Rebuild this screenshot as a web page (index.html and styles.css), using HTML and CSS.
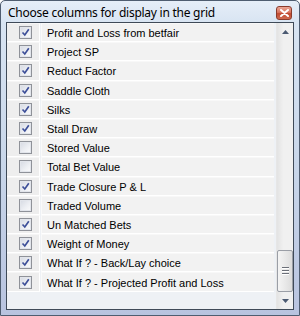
FILE: index.html
```html
<!DOCTYPE html>
<html>
<head>
<meta charset="utf-8">
<link rel="stylesheet" href="styles.css">
</head>
<body>
<div class="window">
  <div class="titlebar">
    <span class="title">Choose columns for display in the grid</span>
    <div class="close"><svg width="9" height="8" viewBox="0 0 9 8"><path d="M1 1 L8 7 M8 1 L1 7" stroke="#fff" stroke-width="2" stroke-linecap="round"/></svg></div>
  </div>
  <div class="client">
    <div class="grid">
      <div class="rows">
        <div class="row"><div class="cbcell"><span class="cb"><svg class="tick" viewBox="0 0 9 9"><path d="M1.5 4.5 L3.8 7 L7.8 1.3" fill="none" stroke="#3d4f99" stroke-width="1.7"/></svg></span></div><div class="name">Profit and Loss from betfair</div></div>
        <div class="row"><div class="cbcell"><span class="cb"><svg class="tick" viewBox="0 0 9 9"><path d="M1.5 4.5 L3.8 7 L7.8 1.3" fill="none" stroke="#3d4f99" stroke-width="1.7"/></svg></span></div><div class="name">Project SP</div></div>
        <div class="row"><div class="cbcell"><span class="cb"><svg class="tick" viewBox="0 0 9 9"><path d="M1.5 4.5 L3.8 7 L7.8 1.3" fill="none" stroke="#3d4f99" stroke-width="1.7"/></svg></span></div><div class="name">Reduct Factor</div></div>
        <div class="row"><div class="cbcell"><span class="cb"><svg class="tick" viewBox="0 0 9 9"><path d="M1.5 4.5 L3.8 7 L7.8 1.3" fill="none" stroke="#3d4f99" stroke-width="1.7"/></svg></span></div><div class="name">Saddle Cloth</div></div>
        <div class="row"><div class="cbcell"><span class="cb"><svg class="tick" viewBox="0 0 9 9"><path d="M1.5 4.5 L3.8 7 L7.8 1.3" fill="none" stroke="#3d4f99" stroke-width="1.7"/></svg></span></div><div class="name">Silks</div></div>
        <div class="row"><div class="cbcell"><span class="cb"><svg class="tick" viewBox="0 0 9 9"><path d="M1.5 4.5 L3.8 7 L7.8 1.3" fill="none" stroke="#3d4f99" stroke-width="1.7"/></svg></span></div><div class="name">Stall Draw</div></div>
        <div class="row"><div class="cbcell"><span class="cb"></span></div><div class="name">Stored Value</div></div>
        <div class="row"><div class="cbcell"><span class="cb"></span></div><div class="name">Total Bet Value</div></div>
        <div class="row"><div class="cbcell"><span class="cb"><svg class="tick" viewBox="0 0 9 9"><path d="M1.5 4.5 L3.8 7 L7.8 1.3" fill="none" stroke="#3d4f99" stroke-width="1.7"/></svg></span></div><div class="name">Trade Closure P &amp; L</div></div>
        <div class="row"><div class="cbcell"><span class="cb"></span></div><div class="name">Traded Volume</div></div>
        <div class="row"><div class="cbcell"><span class="cb"><svg class="tick" viewBox="0 0 9 9"><path d="M1.5 4.5 L3.8 7 L7.8 1.3" fill="none" stroke="#3d4f99" stroke-width="1.7"/></svg></span></div><div class="name">Un Matched Bets</div></div>
        <div class="row"><div class="cbcell"><span class="cb"><svg class="tick" viewBox="0 0 9 9"><path d="M1.5 4.5 L3.8 7 L7.8 1.3" fill="none" stroke="#3d4f99" stroke-width="1.7"/></svg></span></div><div class="name">Weight of Money</div></div>
        <div class="row"><div class="cbcell"><span class="cb"><svg class="tick" viewBox="0 0 9 9"><path d="M1.5 4.5 L3.8 7 L7.8 1.3" fill="none" stroke="#3d4f99" stroke-width="1.7"/></svg></span></div><div class="name">What If ? - Back/Lay choice</div></div>
        <div class="row"><div class="cbcell"><span class="cb"><svg class="tick" viewBox="0 0 9 9"><path d="M1.5 4.5 L3.8 7 L7.8 1.3" fill="none" stroke="#3d4f99" stroke-width="1.7"/></svg></span></div><div class="name">What If ? - Projected Profit and Loss</div></div>
      </div>
      <div class="vscroll">
        <div class="sbtn"><svg width="7" height="4" viewBox="0 0 7 4"><path d="M0 4 L3.5 0 L7 4 Z" fill="#4b5a72"/></svg></div>
        <div class="track"><div class="thumb"><span class="grip"></span><span class="grip"></span><span class="grip"></span></div></div>
        <div class="sbtn"><svg width="7" height="4" viewBox="0 0 7 4"><path d="M0 0 L7 0 L3.5 4 Z" fill="#4b5a72"/></svg></div>
      </div>
    </div>
  </div>
</div>
</body>
</html>
```
FILE: styles.css
```css
html, body { margin: 0; padding: 0; }
body { width: 300px; height: 316px; overflow: hidden; background: #fff; }

.window {
  box-sizing: border-box;
  width: 300px;
  height: 316px;
  border: 1px solid #4f5d70;
  border-radius: 5px 5px 0 0;
  background: linear-gradient(to bottom, #e6eef8 0px, #d8e4f2 22px, #c9d7ea 160px, #b8c3df 316px);
  display: flex;
  flex-direction: column;
  font-family: "Liberation Sans", Arial, sans-serif;
}

.titlebar {
  height: 21px;
  display: flex;
  align-items: center;
  padding: 0 7px 0 7px;
}
.title {
  font-family: "Noto Sans", "Open Sans", sans-serif;
  font-size: 12px;
  letter-spacing: -0.25px;
  color: #000;
  margin-top: 1px;
  flex: 1;
}
.close {
  width: 16px;
  height: 14px;
  box-sizing: border-box;
  margin-top: 2px;
  border: 1px solid #8a3b2c;
  border-radius: 3px;
  background: linear-gradient(to bottom, #eba796 0%, #d8735e 45%, #c04a30 55%, #cf6a50 100%);
  display: flex;
  align-items: center;
  justify-content: center;
}
.close svg { display: block; }

.client {
  flex: 1;
  display: flex;
  padding: 0 5px 5px 5px;
}

.grid {
  flex: 1;
  display: flex;
  border: 1px solid #3f4a58;
  background: #eef1f5;
}

.rows {
  flex: 1;
  display: flex;
  flex-direction: column;
}

.row {
  height: 19.2px;
  display: flex;
  flex: none;
}
.cbcell {
  width: 33px;
  box-sizing: border-box;
  background: #eeeeee;
  border-right: 1px solid #ffffff;
  border-bottom: 1px solid #ffffff;
  border-top: 1px solid #f6f6f6;
  display: flex;
  align-items: center;
  padding-left: 12px;
}
.name {
  flex: 1;
  margin-left: 1px;
  margin-right: 2px;
  box-sizing: border-box;
  background: #f2f2f2;
  border-bottom: 1px solid #ffffff;
  border-top: 1px solid #f8f8f8;
  border-left: 1px solid #fafafa;
  font-size: 11px;
  color: #000;
  padding-left: 5px;
  display: flex;
  align-items: center;
  padding-top: 1px;
  white-space: nowrap;
}

.cb {
  width: 13px;
  height: 13px;
  box-sizing: border-box;
  border: 1px solid #8f9299;
  background: linear-gradient(135deg, #d5d9e2 0%, #eef0f4 60%, #fbfbfc 100%);
  box-shadow: inset 0 0 0 1px #e2e5eb;
  display: flex;
  align-items: center;
  justify-content: center;
}
.tick { width: 9px; height: 9px; display: block; }

.vscroll {
  width: 17px;
  display: flex;
  flex-direction: column;
  background: linear-gradient(to right, #e3e3e3, #f0f0f0 40%, #f0f0f0);
  border-left: 1px solid #e6e6e6;
  box-sizing: border-box;
}
.sbtn {
  height: 17px;
  display: flex;
  align-items: center;
  justify-content: center;
  flex: none;
}
.track {
  flex: 1;
  display: flex;
  flex-direction: column;
  justify-content: flex-end;
}
.thumb {
  height: 42px;
  box-sizing: border-box;
  border: 1px solid #9a9ea6;
  border-radius: 2px;
  background: linear-gradient(to right, #f4f4f4, #e9e9e9 50%, #dcdcdc);
  display: flex;
  flex-direction: column;
  align-items: center;
  justify-content: center;
  gap: 1px;
}
.grip {
  width: 7px;
  height: 1px;
  background: #6b6f78;
  box-shadow: 0 1px 0 #ffffff;
  margin-bottom: 1px;
}
```
